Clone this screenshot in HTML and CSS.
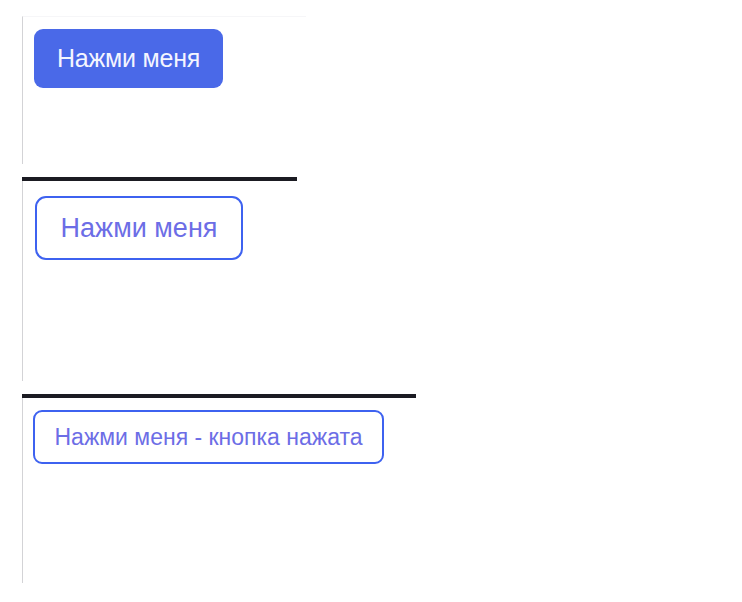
FILE: index.html
```html
<!DOCTYPE html>
<html lang="ru">
<head>
<meta charset="utf-8">
<title>Кнопки</title>
<link rel="stylesheet" href="styles.css">
</head>
<body>
<main class="page">
  <section class="story story-one">
    <button class="btn btn-primary" type="button">Нажми меня</button>
  </section>
  <div class="divider divider-one"></div>
  <section class="story story-two">
    <button class="btn btn-outline btn-large" type="button">Нажми меня</button>
  </section>
  <div class="divider divider-two"></div>
  <section class="story story-three">
    <button class="btn btn-outline btn-small" type="button">Нажми меня - кнопка нажата</button>
  </section>
</main>
</body>
</html>
```

FILE: styles.css
```css
html, body {
  margin: 0;
  padding: 0;
  background: #ffffff;
}

body {
  font-family: "Liberation Sans", Arial, sans-serif;
}

.page {
  padding: 16px 0 0 22px;
  display: flex;
  flex-direction: column;
  align-items: flex-start;
}

.story {
  box-sizing: border-box;
  border-left: 1px solid #d3d3d6;
  display: flex;
  align-items: flex-start;
}

.story-one {
  height: 148px;
  width: 284px;
  padding: 12px 0 0 11px;
  border-top: 1px solid #f6f6f8;
  margin-bottom: 13px;
}

.story-two {
  height: 200px;
  padding: 15px 0 0 12px;
  margin-bottom: 13px;
}

.story-three {
  height: 185px;
  padding: 12px 0 0 10px;
}

.divider {
  height: 4px;
  background: #1b1b22;
}

.divider-one {
  width: 275px;
}

.divider-two {
  width: 394px;
}

.btn {
  box-sizing: border-box;
  display: inline-flex;
  align-items: center;
  justify-content: center;
  margin: 0;
  font-family: "Liberation Sans", Arial, sans-serif;
  cursor: pointer;
  white-space: nowrap;
}

.btn-primary {
  width: 189px;
  height: 59px;
  border: none;
  border-radius: 9px;
  background: #4a69e8;
  color: #f4f5ff;
  font-size: 25px;
  letter-spacing: -0.2px;
  padding: 0;
}

.btn-outline {
  background: #ffffff;
  border: 2px solid #3e62f0;
  color: #6c6de6;
  padding: 0;
}

.btn-large {
  width: 208px;
  height: 64px;
  border-radius: 11px;
  font-size: 27px;
}

.btn-small {
  width: 351px;
  height: 54px;
  border-radius: 9px;
  font-size: 23px;
}
```
